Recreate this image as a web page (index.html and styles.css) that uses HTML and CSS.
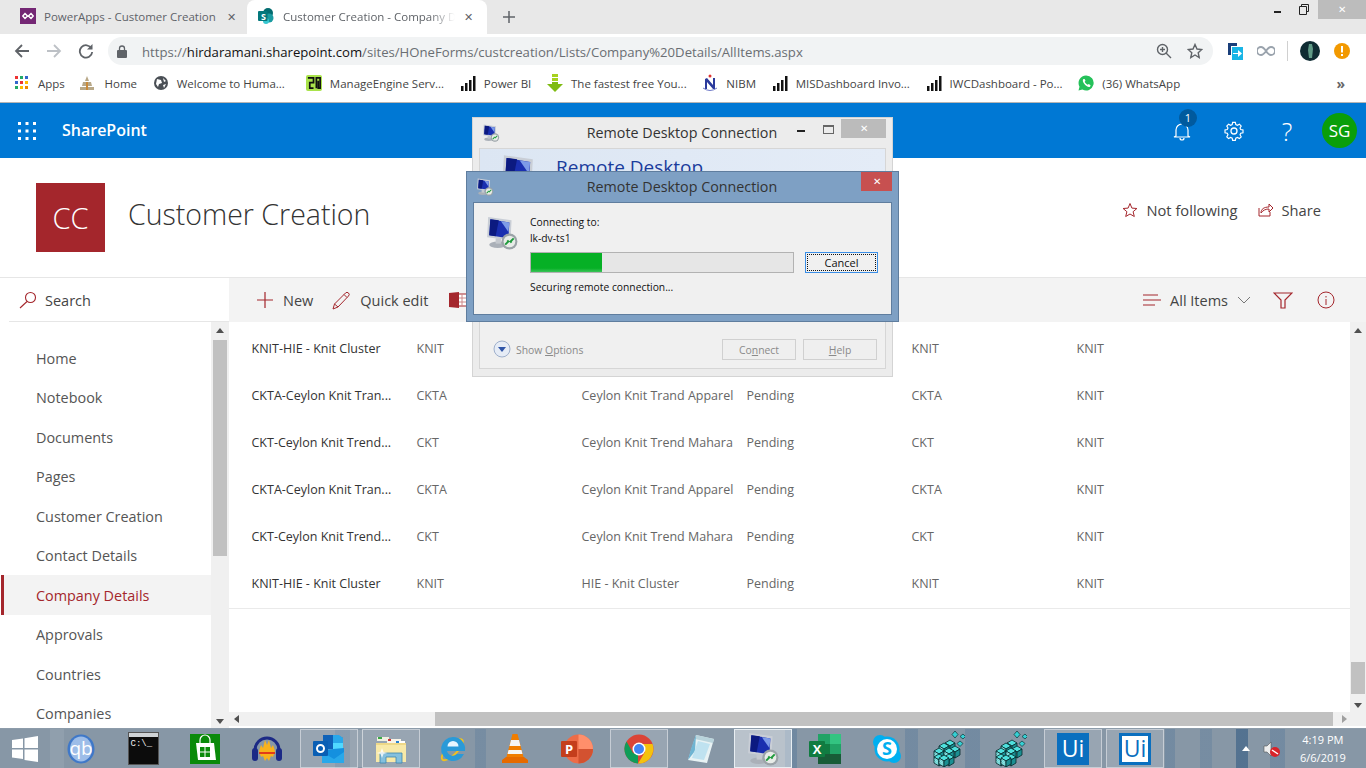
FILE: index.html
```html
<!DOCTYPE html>
<html lang="en">
<head>
  <meta charset="UTF-8">
  <title>Customer Creation - Company Details</title>
  <link rel="stylesheet" href="styles.css">
</head>
<body>
  <svg class="defs" width="0" height="0">
    <symbol id="bars" viewBox="0 0 16 16"><path d="M1 11h2.500v5H1zM5 8h2.500v8H5zM9 5h2.500v11H9zM13 1h2.500v15H13z" fill="#111"/></symbol>
    <symbol id="rdp" viewBox="0 0 32 32">
      <path d="M3 1l22 3-1 19L2 20z" fill="#c9ced6"/>
      <path d="M5 3l18 3-1 15L4 18z" fill="#1a2fb0"/>
      <path d="M5 3l8 1-3 15-6-1z" fill="#0c1a80"/>
      <path d="M15 5l8 1-1 9z" fill="#7d9be8"/>
      <ellipse cx="12" cy="27" rx="8" ry="3" fill="#aab0b8"/>
      <path d="M10 21h5v5h-5z" fill="#c4c8ce"/>
      <circle cx="23" cy="24" r="7.500" fill="#9ba3a8"/>
      <circle cx="23" cy="24" r="5.500" fill="#e8ece8"/>
      <path d="M19 27l3-3-1-1M27 21l-3 3 1 1" fill="none" stroke="#1e9a3c" stroke-width="1.800"/>
    </symbol>
    <pattern id="checker" width="2.400" height="2.400" patternUnits="userSpaceOnUse">
      <rect width="2.400" height="2.400" fill="#21b5b5"/>
      <rect width="1.200" height="1.200" fill="#d8ffff"/>
      <rect x="1.200" y="1.200" width="1.200" height="1.200" fill="#d8ffff"/>
    </pattern>
    <g id="cube">
      <path d="M0 3l5-3 5 3-5 3z" fill="#4fe0dc" stroke="#062a2c" stroke-width=".8"/>
      <path d="M0 3l5 3v6l-5-3z" fill="url(#checker)" stroke="#062a2c" stroke-width=".8"/>
      <path d="M10 3l-5 3v6l5-3z" fill="#1b8f92" stroke="#062a2c" stroke-width=".8"/>
    </g>
    <symbol id="registry" viewBox="0 0 32 36">
      <path d="M22 0l3 3.500-3 3.500-3-3.500zM30 3l2.500 2.500L30 8l-3-2.500z" fill="#35d0d4" stroke="#0d3336" stroke-width=".7"/>
      <path d="M27 10l3 2.500-3 3-3-3z" fill="#35d0d4" stroke="#0d3336" stroke-width=".7"/>
      <use href="#cube" x="12" y="9"/>
      <use href="#cube" x="6" y="12"/>
      <use href="#cube" x="17" y="15"/>
      <use href="#cube" x="1" y="17"/>
      <use href="#cube" x="11" y="17"/>
      <use href="#cube" x="1" y="23"/>
      <use href="#cube" x="11" y="23"/>
      <use href="#cube" x="6" y="24"/>
    </symbol>
  </svg>

  <div class="browser">
    <div class="tabstrip">
      <div class="tab">
        <svg class="favicon" viewBox="0 0 16 16"><rect width="16" height="16" fill="#742774"/><path d="M5 5.500L7.500 8 5 10.500 2.800 8zM11 5.500L13.200 8 11 10.500 8.500 8z" fill="none" stroke="#fff" stroke-width="1.500"/></svg>
        <span class="tab-title">PowerApps - Customer Creation</span>
        <span class="tab-close">✕</span>
      </div>
      <div class="tab tab-active">
        <svg class="favicon" viewBox="0 0 16 16"><circle cx="10" cy="5" r="5" fill="#036c70"/><circle cx="11" cy="10" r="4.500" fill="#1a9ba1"/><circle cx="8" cy="13" r="3" fill="#37c6d0"/><rect y="3" width="9.500" height="10" rx="1" fill="#03787c"/></svg>
        <span class="favicon-letter">S</span>
        <span class="tab-title">Customer Creation - Company Details</span>
        <span class="tab-close">✕</span>
      </div>
      <svg class="new-tab" width="12" height="12" viewBox="0 0 12 12"><path d="M6 0v12M0 6h12" stroke="#5f6368" stroke-width="1.500"/></svg>
      <div class="win-controls">
        <span class="win-min"></span>
        <svg class="win-restore" width="10" height="11" viewBox="0 0 10 11"><path d="M2.500 2.500V.5h7v7h-2M.5 2.500h7v8h-7z" fill="none" stroke="#222"/></svg>
        <span class="win-close">✕</span>
      </div>
    </div>

    <div class="toolbar">
      <svg class="nav-icon" width="16" height="16" viewBox="0 0 16 16"><path d="M15 8H2M8 2L2 8l6 6" fill="none" stroke="#5f6368" stroke-width="1.800"/></svg>
      <svg class="nav-icon" width="16" height="16" viewBox="0 0 16 16"><path d="M1 8h13M8 2l6 6-6 6" fill="none" stroke="#bdc1c6" stroke-width="1.800"/></svg>
      <svg class="nav-icon" width="16" height="16" viewBox="0 0 16 16"><path d="M13.500 5.500A6.200 6.200 0 1 0 14.200 9" fill="none" stroke="#5f6368" stroke-width="1.800"/><path d="M14.500 1v5.500H9z" fill="#5f6368"/></svg>
      <div class="omnibox">
        <svg width="10" height="13" viewBox="0 0 10 13"><rect y="5" width="10" height="8" rx="1" fill="#5f6368"/><path d="M2.500 5V3.500a2.500 2.500 0 0 1 5 0V5" fill="none" stroke="#5f6368" stroke-width="1.300"/></svg>
        <span class="url"><span class="url-dim">https://</span>hirdaramani.sharepoint.com<span class="url-dim">/sites/HOneForms/custcreation/Lists/Company%20Details/AllItems.aspx</span></span>
        <svg class="omni-right" width="16" height="16" viewBox="0 0 16 16"><circle cx="6.500" cy="6.500" r="5" fill="none" stroke="#5f6368" stroke-width="1.400"/><path d="M10 10l5 5M6.500 4v5M4 6.500h5" stroke="#5f6368" stroke-width="1.400"/></svg>
        <svg width="16" height="16" viewBox="0 0 16 16"><path d="M8 1.500l2 4.500 4.800.5-3.600 3.200 1 4.800L8 12l-4.200 2.500 1-4.800L1.200 6.500 6 6z" fill="none" stroke="#5f6368" stroke-width="1.400"/></svg>
      </div>
      <svg width="16" height="18" viewBox="0 0 16 18"><path d="M1 1h9v3H4v9H1z" fill="#1a3f7a"/><path d="M5 5h11v13H5z" fill="#19b5e6"/><path d="M6 11h5V8l4 3.500-4 3.500v-3H6z" fill="#fff"/></svg>
      <svg class="ext-infinity" width="18" height="10" viewBox="0 0 18 10"><path d="M9 5C7 2 5.500 1 4 1a4 4 0 0 0 0 8c1.500 0 3-1 5-4s3.500-4 5-4a4 4 0 0 1 0 8c-1.500 0-3-1-5-4z" fill="none" stroke="#9aa3ad" stroke-width="1.800"/></svg>
      <span class="toolbar-sep"></span>
      <svg class="avatar" width="20" height="20" viewBox="0 0 20 20"><circle cx="10" cy="10" r="10" fill="#0f2c33"/><path d="M9 3h3l1 5-1 9H9L8 9z" fill="#5f9a86"/></svg>
      <svg width="16" height="16" viewBox="0 0 16 16"><circle cx="8" cy="8" r="8" fill="#f29900"/><path d="M7 3h2v6.500H7zM7 11h2v2H7z" fill="#fff"/></svg>
    </div>

    <div class="bookmarks">
      <div class="bm"><svg width="16" height="14" viewBox="0 0 14 14"><path d="M0 0h3v3H0z" fill="#e33"/><path d="M5 0h3v3H5z" fill="#2a6"/><path d="M10 0h3v3h-3z" fill="#36c"/><path d="M0 5h3v3H0z" fill="#36c"/><path d="M5 5h3v3H5z" fill="#e33"/><path d="M10 5h3v3h-3z" fill="#fb0"/><path d="M0 10h3v3H0z" fill="#2a6"/><path d="M5 10h3v3H5z" fill="#fb0"/><path d="M10 10h3v3h-3z" fill="#e80"/></svg>Apps</div>
      <div class="bm bm-home"><svg width="20" height="16" viewBox="0 0 20 16"><path d="M10 1l2 5H8zM6 7h8l1 4H5zM3 12h14v3H3z" fill="#b8a888"/><path d="M9 7h2v8H9z" fill="#c98a3a"/></svg>Home</div>
      <div class="bm bm-wide"><svg width="16" height="14" viewBox="0 0 14 14"><circle cx="7" cy="7" r="7" fill="#4a4f55"/><path d="M3 3l4 1 1 3-3 1-1 3-2-3zM9 2l3 3-2 1zM9 9l3-1-2 4z" fill="#fff"/></svg>Welcome to Huma...</div>
      <div class="bm"><svg width="16" height="16" viewBox="0 0 17 17"><rect width="17" height="17" rx="2" fill="#a9e34b"/><path d="M2 3h6v5H4v6h4M11 14V3h4v11h-2V6" fill="none" stroke="#111" stroke-width="1.800"/></svg>ManageEngine Serv...</div>
      <div class="bm"><svg width="16" height="16"><use href="#bars"/></svg>Power BI</div>
      <div class="bm"><svg width="16" height="18" viewBox="0 0 16 18"><path d="M5 0h6v3H5zM5 4h6v3H5z" fill="#a6d21e"/><path d="M5 8h6v2h5l-8 8-8-8h5z" fill="#7fbb12"/></svg>The fastest free You...</div>
      <div class="bm"><svg width="16" height="18" viewBox="0 0 16 18"><circle cx="8" cy="2" r="1.500" fill="#d33"/><path d="M3 15V5l2-1 6 7V4h2v11h-2L5 8v7z" fill="#2b3a9c"/><path d="M1 14q7 5 14 0" fill="none" stroke="#6f7ac8"/></svg>NIBM</div>
      <div class="bm"><svg width="16" height="16"><use href="#bars"/></svg>MISDashboard Invo...</div>
      <div class="bm"><svg width="16" height="16"><use href="#bars"/></svg>IWCDashboard - Po...</div>
      <div class="bm"><svg width="16" height="16" viewBox="0 0 16 16"><path d="M8 .5a7.500 7.500 0 0 0-6.500 11.200L.5 15.500l3.900-1A7.500 7.500 0 1 0 8 .5z" fill="#25c15a"/><path d="M5.500 4c-1 1-1 2.500.5 4.500s3.500 3.500 5 3.500c1 0 1.500-1 1.500-1.800L10.800 9l-1 .8C8.500 9.300 7.200 8 6.700 6.800l.8-1L6.600 4z" fill="#fff"/></svg>(36) WhatsApp</div>
      <span class="bm-more">»</span>
    </div>
  </div>

  <div class="suitebar">
    <svg class="waffle" width="18" height="18" viewBox="0 0 18 18"><g fill="#fff"><rect width="3" height="3"/><rect x="7.500" width="3" height="3"/><rect x="15" width="3" height="3"/><rect y="7.500" width="3" height="3"/><rect x="7.500" y="7.500" width="3" height="3"/><rect x="15" y="7.500" width="3" height="3"/><rect y="15" width="3" height="3"/><rect x="7.500" y="15" width="3" height="3"/><rect x="15" y="15" width="3" height="3"/></g></svg>
    <span class="suite-name">SharePoint</span>
    <div class="suite-right">
      <div class="bell">
        <svg width="18" height="20" viewBox="0 0 18 20"><path d="M3 15V9a6 6 0 0 1 12 0v6l2 1H1zM7 17a2 2 0 0 0 4 0" fill="none" stroke="#fff" stroke-width="1.200"/></svg>
        <span class="bell-badge">1</span>
      </div>
      <svg width="20" height="20" viewBox="0 0 20 20"><circle cx="10" cy="10" r="3" fill="none" stroke="#fff" stroke-width="1.300"/><path d="M8.500 1h3l.5 2.500 1.800.8L16 3l2 2-1.300 2.200.8 1.800 2.500.5v3l-2.500.5-.8 1.800L18 17l-2 2-2.200-1.300-1.800.8-.5 2.500h-3L8 18.500l-1.800-.8L4 19l-2-2 1.300-2.200-.8-1.800L0 12.500v-3L2.500 9l.8-1.800L2 5l2-2 2.200 1.300L8 3.500z" transform="translate(1 .5) scale(.9)" fill="none" stroke="#fff" stroke-width="1.300"/></svg>
      <span class="suite-help">?</span>
      <span class="suite-avatar">SG</span>
    </div>
  </div>

  <div class="site-header">
    <div class="site-logo">CC</div>
    <h1 class="site-title">Customer Creation</h1>
    <div class="site-actions">
      <svg width="16" height="16" viewBox="0 0 16 16"><path d="M8 1.500l1.900 4.600 5 .4-3.800 3.200 1.200 4.800L8 12l-4.300 2.500 1.200-4.800L1.100 6.500l5-.4z" fill="none" stroke="#a4262c"/></svg>
      <span class="site-action-text">Not following</span>
      <svg class="share-icon" width="16" height="14" viewBox="0 0 16 14"><path d="M1 5v8h11V9M3 10c0-4 3-6 8-6V1l4 4-4 4V6c-3 0-6 1-8 4z" fill="none" stroke="#a4262c"/></svg>
      <span class="site-action-text">Share</span>
    </div>
  </div>

  <div class="commandbar">
    <div class="search-box">
      <svg width="18" height="18" viewBox="0 0 18 18"><circle cx="11.500" cy="6.500" r="5" fill="none" stroke="#a4262c" stroke-width="1.100"/><path d="M8 10.500L1 17" stroke="#a4262c" stroke-width="1.100"/></svg>
      <span>Search</span>
    </div>
    <div class="commands">
      <svg width="18" height="18" viewBox="0 0 18 18"><path d="M9 1v16M1 9h16" stroke="#a4262c" stroke-width="1.200"/></svg>
      <span class="cmd-text">New</span>
      <svg class="cmd-icon" width="19" height="19" viewBox="0 0 19 19"><path d="M1 18l1.500-5L13.500 2a2 2 0 0 1 3 3L6 16zM12 3.500l3 3M2.500 13L6 16" fill="none" stroke="#a4262c"/></svg>
      <span class="cmd-text">Quick edit</span>
      <svg class="cmd-icon cmd-excel" width="18" height="16" viewBox="0 0 18 16"><rect x="5" y="2" width="13" height="12" fill="#fff" stroke="#a4262c"/><path d="M9 2v12M13 2v12M5 6h13M5 10h13" stroke="#c88"/><path d="M0 1l10-1v16L0 15z" fill="#a4262c"/></svg>
      <div class="cmd-right">
        <svg width="18" height="12" viewBox="0 0 18 12"><path d="M0 1h15M0 6h18M0 11h12" stroke="#a4262c" stroke-width="1.100"/></svg>
        <span class="cmd-text">All Items</span>
        <svg class="cmd-chevron" width="14" height="8" viewBox="0 0 14 8"><path d="M1 1l6 6 6-6" fill="none" stroke="#777"/></svg>
        <svg class="cmd-filter" width="20" height="17" viewBox="0 0 20 17"><path d="M1 1h18l-7 7v8H8V8z" fill="none" stroke="#a4262c" stroke-width="1.200"/></svg>
        <svg class="cmd-info" width="18" height="18" viewBox="0 0 18 18"><circle cx="9" cy="9" r="8" fill="none" stroke="#a4262c"/><path d="M9 8v6M9 5v1.500" stroke="#a4262c"/></svg>
      </div>
    </div>
  </div>

  <div class="content">
    <nav class="sidenav">
      <div class="nav-links">
        <a class="nav-link">Home</a>
        <a class="nav-link">Notebook</a>
        <a class="nav-link">Documents</a>
        <a class="nav-link">Pages</a>
        <a class="nav-link">Customer Creation</a>
        <a class="nav-link">Contact Details</a>
        <a class="nav-link nav-selected">Company Details</a>
        <a class="nav-link">Approvals</a>
        <a class="nav-link">Countries</a>
        <a class="nav-link">Companies</a>
      </div>
      <div class="nav-scroll">
        <span class="arrow-up"></span>
        <span class="nav-thumb"></span>
        <span class="arrow-down"></span>
      </div>
    </nav>

    <div class="list-wrap">
      <div class="list-main">
        <div class="rows">
          <div class="row"><span class="cell cell-first">KNIT-HIE - Knit Cluster</span><span class="cell">KNIT</span><span class="cell"></span><span class="cell"></span><span class="cell">KNIT</span><span class="cell">KNIT</span></div>
          <div class="row"><span class="cell cell-first">CKTA-Ceylon Knit Tran...</span><span class="cell">CKTA</span><span class="cell">Ceylon Knit Trand Apparel</span><span class="cell">Pending</span><span class="cell">CKTA</span><span class="cell">KNIT</span></div>
          <div class="row"><span class="cell cell-first">CKT-Ceylon Knit Trend...</span><span class="cell">CKT</span><span class="cell">Ceylon Knit Trend Mahara</span><span class="cell">Pending</span><span class="cell">CKT</span><span class="cell">KNIT</span></div>
          <div class="row"><span class="cell cell-first">CKTA-Ceylon Knit Tran...</span><span class="cell">CKTA</span><span class="cell">Ceylon Knit Trand Apparel</span><span class="cell">Pending</span><span class="cell">CKTA</span><span class="cell">KNIT</span></div>
          <div class="row"><span class="cell cell-first">CKT-Ceylon Knit Trend...</span><span class="cell">CKT</span><span class="cell">Ceylon Knit Trend Mahara</span><span class="cell">Pending</span><span class="cell">CKT</span><span class="cell">KNIT</span></div>
          <div class="row"><span class="cell cell-first">KNIT-HIE - Knit Cluster</span><span class="cell">KNIT</span><span class="cell">HIE - Knit Cluster</span><span class="cell">Pending</span><span class="cell">KNIT</span><span class="cell">KNIT</span></div>
        </div>
        <div class="list-scroll">
          <span class="arrow-up"></span>
          <span class="list-thumb"></span>
          <span class="arrow-down"></span>
        </div>
      </div>
      <div class="hscroll">
        <span class="arrow-left"></span>
        <span class="hscroll-thumb"></span>
        <span class="arrow-right"></span>
      </div>
    </div>
  </div>

  <div class="taskbar">
    <div class="tb-item tb-start"><svg width="26" height="26" viewBox="0 0 26 26"><path d="M0 4l11-1.500V12H0zM12.500 2.300L26 0v12H12.500zM0 13.500h11V23L0 21.500zM12.500 13.500H26V26l-13.500-2z" fill="#fff"/></svg></div>
    <div class="tb-item"><svg width="28" height="30" viewBox="0 0 28 30"><ellipse cx="14" cy="15" rx="13.500" ry="14.500" fill="#3f78c8"/><ellipse cx="14" cy="15" rx="11" ry="12.500" fill="#9dbde8"/><text x="14" y="21" text-anchor="middle" class="qb-text">qb</text></svg></div>
    <div class="tb-item"><div class="cmd-window"><span class="cmd-prompt">C:\_</span></div></div>
    <div class="tb-item"><svg width="30" height="30" viewBox="0 0 30 30"><rect width="30" height="30" fill="#0a8a0a"/><path d="M10 9V6a5 5 0 0 1 10 0v3" fill="none" stroke="#fff" stroke-width="1.200"/><path d="M6 9h18l2 17H8z" fill="#fff"/><path d="M10 13h4.500v4.500H10zM15.500 13H20v4.500h-4.500zM10 18.500h4.500V23H10zM15.500 18.500H20V23h-4.500z" fill="#0a8a0a"/></svg></div>
    <div class="tb-item"><svg width="30" height="30" viewBox="0 0 30 30"><path d="M3 16a12 12 0 0 1 24 0" fill="none" stroke="#1c2a86" stroke-width="3"/><rect x="0" y="14" width="6" height="13" rx="3" fill="#1c2a86"/><rect x="24" y="14" width="6" height="13" rx="3" fill="#1c2a86"/><path d="M7 17l2-6 2 3 2-8 2 5 2-5 2 8 2-3 2 6-2 6-2-1-2 5-2-3-2 3-2-5-2 1z" fill="#f9b21c"/><path d="M7 18h16v2H7z" fill="#e23b1a"/></svg></div>
    <div class="tb-item tb-open tb-outlook"><svg width="32" height="30" viewBox="0 0 32 30"><path d="M10 1h14l6 3v11H10z" fill="#0f62b8"/><path d="M20 1h6l4 3v5H20z" fill="#28a8ea"/><path d="M20 9h10v7H20z" fill="#50d9ff"/><path d="M9 16l22-2v14l-2 1H9z" fill="#1490df"/><path d="M9 18l12 7 10-7v11H9z" fill="#28a8ea"/><rect y="7" width="15" height="15" rx="1" fill="#0a5fb4"/><circle cx="7.500" cy="14.500" r="3.500" fill="none" stroke="#fff" stroke-width="2"/></svg></div>
    <div class="tb-item tb-open"><svg width="32" height="30" viewBox="0 0 32 30"><path d="M2 3h12v4H2z" fill="#f0f0e0"/><path d="M3 3h4v2H3z" fill="#3aa847"/><path d="M12 5h14v4H12z" fill="#f8f4e8"/><path d="M13 5h3v2h-3z" fill="#c33"/><path d="M21 7h9v4h-9z" fill="#fff"/><path d="M21 7h3v2h-3z" fill="#2a80d0"/><path d="M1 9h30v19H1z" fill="#eed888"/><path d="M1 11h30v17H1z" fill="#f8e9a8"/><path d="M5 29V19h22v10h-6v-6H11v6z" fill="#84c0de" stroke="#3d86ad" stroke-width=".8"/><path d="M7 14l1.500 4 4 1-4 1L7 24l-1.500-4-4-1 4-1z" fill="#fff" opacity=".8"/></svg></div>
    <div class="tb-item"><svg width="30" height="30" viewBox="0 0 30 30"><ellipse cx="14" cy="15" rx="14" ry="5" transform="rotate(-45 15 15)" fill="none" stroke="#f3c21b" stroke-width="1.800"/><path d="M15 3a12 12 0 1 0 11 17h-7a6 6 0 0 1-10-3h18a12 12 0 0 0-12-14z" fill="#2a9ad8"/><path d="M9.500 12.500a5.500 5.500 0 0 1 11 0z" fill="#e8f6ff"/></svg></div>
    <div class="tb-item"><svg width="28" height="30" viewBox="0 0 28 30"><path d="M11.500 0h5l6 23H5.500z" fill="#f07d00"/><path d="M10 6h8l1.500 6h-11zM7.500 16h13l1 4h-15z" fill="#f5f5f5"/><path d="M5 23h18l4 3v3H1v-3z" fill="#e66a00"/></svg></div>
    <div class="tb-item"><svg width="32" height="30" viewBox="0 0 32 30"><circle cx="17.500" cy="15" r="14.500" fill="#ed6c47"/><path d="M17.500.5A14.500 14.500 0 0 1 32 15H17.500z" fill="#ff8f6b"/><path d="M17.500 15H32a14.500 14.500 0 0 1-14.500 14.500z" fill="#d35230"/><rect y="7" width="16" height="16" rx="1" fill="#c43e1c"/><text x="8" y="20" text-anchor="middle" class="office-letter">P</text></svg></div>
    <div class="tb-item tb-open"><svg width="30" height="30" viewBox="0 0 30 30"><circle cx="15" cy="15" r="14.500" fill="#db4437"/><path d="M15 10h13.500A14.500 14.500 0 0 1 14 29.500L21 18z" fill="#f4c20d"/><path d="M14 29.500A14.500 14.500 0 0 1 2.500 7.500L9 19l5 1z" fill="#0f9d58"/><circle cx="15" cy="15" r="6.500" fill="#fff"/><circle cx="15" cy="15" r="5" fill="#4285f4"/></svg></div>
    <div class="tb-item"><svg width="30" height="34" viewBox="0 0 30 34"><path d="M10 3l18 4-7 24-19-3z" fill="#e8f2f4"/><path d="M10 3l18 4-1 4-18-4z" fill="#b9d4dc"/><path d="M2 28c2-8 4-15 8-25l-1 16z" fill="#6fb4d2"/><path d="M6 26l6-17 12 3-6 16z" fill="#bfe2f0"/></svg></div>
    <div class="tb-item tb-open tb-current"><svg width="34" height="34"><use href="#rdp"/></svg></div>
    <div class="tb-item"><svg width="32" height="32" viewBox="0 0 32 32"><path d="M9 1h12v10H9z" fill="#21a366"/><path d="M21 1h11v10H21z" fill="#33c481"/><path d="M9 11h12v10H9z" fill="#107c41"/><path d="M21 11h11v10H21z" fill="#21a366"/><path d="M9 21h23v10H9z" fill="#185c37"/><rect y="8" width="16" height="16" rx="1" fill="#107c41"/><text x="8" y="21" text-anchor="middle" class="office-letter">X</text></svg></div>
    <div class="tb-item"><svg width="30" height="34" viewBox="0 0 30 30"><circle cx="8" cy="8" r="7" fill="#00aff0"/><circle cx="22" cy="22" r="7" fill="#00aff0"/><circle cx="15" cy="15" r="12.500" fill="#00aff0"/><circle cx="15" cy="15" r="10" fill="#fff"/><text x="15" y="21" text-anchor="middle" class="skype-letter">S</text></svg></div>
    <div class="tb-item"><svg width="32" height="36"><use href="#registry"/></svg></div>
    <div class="tb-item"><svg width="32" height="36"><use href="#registry"/></svg></div>
    <div class="tb-item tb-open"><span class="ui-tile">Ui</span></div>
    <div class="tb-item tb-open"><span class="ui-tile ui-outline">Ui</span></div>
    <div class="tray">
      <span class="tray-up"></span>
      <svg width="18" height="18" viewBox="0 0 18 18"><path d="M1 6h3l4-4v14l-4-4H1z" fill="#eee" stroke="#555" stroke-width=".6"/><circle cx="12" cy="12" r="5" fill="#d8232a"/><path d="M9 10l6 4" stroke="#fff" stroke-width="1.500"/></svg>
      <div class="clock"><span>4:19 PM</span><span>6/6/2019</span></div>
    </div>
  </div>

  <!-- windows on top of the page -->
  <div class="rdp-back">
    <div class="rdp-back-title">
      <svg width="18" height="18"><use href="#rdp"/></svg>
      <span class="rdp-caption">Remote Desktop Connection</span>
      <span class="back-min"></span>
      <span class="back-max"></span>
      <span class="back-close">✕</span>
    </div>
    <div class="rdp-back-panel">
      <div class="rdp-banner">
        <svg width="42" height="42"><use href="#rdp"/></svg>
        <span>Remote Desktop</span>
      </div>
      <div class="rdp-back-footer">
        <svg width="18" height="18" viewBox="0 0 18 18"><circle cx="9" cy="9" r="8" fill="#e6ecf6" stroke="#9fb0cc"/><path d="M5 7h8l-4 5z" fill="#2f55a8"/></svg>
        <span class="show-options">Show <u>O</u>ptions</span>
        <span class="back-btn back-btn-connect">Co<u>n</u>nect</span>
        <span class="back-btn"><u>H</u>elp</span>
      </div>
    </div>
  </div>

  <div class="rdp-front">
    <div class="rdp-front-title">
      <svg width="18" height="18"><use href="#rdp"/></svg>
      <span class="rdp-caption">Remote Desktop Connection</span>
      <span class="front-close">✕</span>
    </div>
    <div class="rdp-front-panel">
      <svg class="rdp-big" width="34" height="34"><use href="#rdp"/></svg>
      <div class="rdp-body">
        <div class="rdp-msg">Connecting to:</div>
        <div class="rdp-msg">lk-dv-ts1</div>
        <div class="rdp-progress-row">
          <div class="progress"><div class="progress-fill" style="width: 27%"></div></div>
          <div class="cancel-btn"><span>Cancel</span></div>
        </div>
        <div class="rdp-msg rdp-status">Securing remote connection...</div>
      </div>
    </div>
  </div>
</body>
</html>
```

FILE: styles.css
```css
* {
  box-sizing: border-box;
}
html, body {
  margin: 0;
  height: 100%;
}
body {
  position: relative;
  width: 1366px;
  height: 768px;
  overflow: hidden;
  display: flex;
  flex-direction: column;
  font-family: "Open Sans", "Noto Sans", sans-serif;
  color: #333;
  background: #fff;
}
svg {
  flex-shrink: 0;
  display: block;
}
.defs {
  position: absolute;
}

/* browser chrome */
.browser {
  height: 103px;
  border-bottom: 1px solid #b5b5b5;
}
.tabstrip {
  height: 34px;
  background: #e8e8e8;
  display: flex;
  align-items: center;
  padding-left: 8px;
}
.tab {
  width: 239px;
  height: 34px;
  display: flex;
  align-items: center;
  padding: 0 0 2px 12px;
  gap: 8px;
  position: relative;
  font-size: 11.5px;
  color: #5f6368;
  white-space: nowrap;
}
.tab-active {
  width: 240px;
  padding-left: 11px;
  gap: 9px;
  background: #fff;
  border-radius: 8px 8px 0 0;
}
.favicon {
  width: 16px;
  height: 16px;
}
.favicon-letter {
  position: absolute;
  left: 14px;
  font-size: 9px;
  font-weight: 700;
  color: #fff;
}
.tab-title {
  width: 172px;
  overflow: hidden;
  flex-shrink: 0;
}
.tab-active .tab-title {
  -webkit-mask-image: linear-gradient(90deg, #000 85%, transparent);
  mask-image: linear-gradient(90deg, #000 85%, transparent);
}
.tab-close {
  font-size: 11px;
  color: #5f6368;
  margin-left: 3px;
}
.tab-active .tab-close {
  margin-left: 0;
}
.new-tab {
  margin-left: 16px;
}
.win-controls {
  margin-left: auto;
  display: flex;
  align-items: flex-start;
  height: 34px;
}
.win-min {
  width: 7px;
  height: 2px;
  background: #222;
  margin: 11px 18px 0 0;
}
.win-restore {
  margin: 4px 9px 0 0;
}
.win-close {
  width: 48px;
  height: 19px;
  background: #bcbcbc;
  color: #fff;
  font-size: 10px;
  line-height: 19px;
  text-align: center;
}
.toolbar {
  height: 34px;
  display: flex;
  align-items: center;
  padding-left: 14px;
}
.nav-icon {
  margin-right: 16px;
}
.omnibox {
  width: 1105px;
  height: 28px;
  margin: 0 14px 0 -2px;
  background: #f1f3f4;
  border-radius: 14px;
  display: flex;
  align-items: center;
  gap: 15px;
  padding: 0 10px 0 9px;
}
.url {
  padding-top: 1px;
  font-size: 13.15px;
  color: #111;
  white-space: nowrap;
}
.url-dim {
  color: #6a6e73;
}
.omni-right {
  margin-left: auto;
}
.ext-infinity {
  margin-left: 14px;
}
.toolbar-sep {
  width: 1px;
  height: 20px;
  background: #d0d0d0;
  margin: 0 12px;
}
.avatar {
  margin-right: 14px;
}
.bookmarks {
  height: 34px;
  display: flex;
  align-items: center;
  padding: 0 0 4px 14px;
  position: relative;
  font-size: 11.5px;
  color: #444;
  white-space: nowrap;
}
.bm {
  display: flex;
  align-items: center;
  gap: 8px;
  margin-right: 15.7px;
}
.bm-home {
  margin-left: -4px;
}
.bm-wide {
  margin-right: 21px;
}
.bm-more {
  position: absolute;
  right: 21px;
  font-size: 14px;
  font-weight: 700;
  color: #666;
}

/* sharepoint bars */
.suitebar {
  height: 55px;
  background: #0078d4;
  display: flex;
  align-items: center;
  padding-left: 18px;
  flex-shrink: 0;
}
.suite-name {
  margin: -2px 0 0 26px;
  font-size: 16px;
  font-weight: 600;
  color: #fff;
}
.suite-right {
  margin-left: auto;
  display: flex;
  align-items: center;
  gap: 34px;
  padding-right: 9px;
}
.bell {
  position: relative;
  margin-right: -1px;
}
.bell-badge {
  position: absolute;
  left: 6px;
  top: -12px;
  width: 18px;
  height: 18px;
  border-radius: 50%;
  background: #005a9e;
  color: #fff;
  font-size: 11px;
  line-height: 18px;
  text-align: center;
}
.suite-help {
  width: 24px;
  margin-left: -3px;
  font-size: 25px;
  font-weight: 300;
  color: #fff;
  text-align: center;
}
.suite-avatar {
  width: 35px;
  height: 35px;
  margin-left: -11px;
  border-radius: 50%;
  background: #0a9e0a;
  color: #fff;
  font-size: 17px;
  line-height: 35px;
  text-align: center;
}
.site-header {
  height: 119px;
  display: flex;
  align-items: center;
  padding: 0 45px 0 36px;
  flex-shrink: 0;
}
.site-logo {
  width: 69px;
  height: 69px;
  margin-top: -1px;
  background: #a4262c;
  color: #fff;
  font-size: 29px;
  font-weight: 300;
  line-height: 69px;
  text-align: center;
}
.site-title {
  margin: -8px 0 0 23px;
  font-size: 28.5px;
  font-weight: 300;
  color: #333;
}
.site-actions {
  margin-left: auto;
  margin-top: -15px;
  display: flex;
  align-items: center;
  gap: 8px;
}
.site-action-text {
  font-size: 14.7px;
  color: #444;
}
.share-icon {
  margin-left: 12px;
}
.commandbar {
  height: 45px;
  display: flex;
  border-top: 1px solid #e6e6e6;
  flex-shrink: 0;
  font-size: 14.5px;
}
.search-box {
  width: 229px;
  display: flex;
  align-items: center;
  gap: 8px;
  padding-left: 19px;
  color: #444;
  background: linear-gradient(#e6e6e6, #e6e6e6) no-repeat 9px 100% / 220px 1px;
}
.commands {
  flex: 1;
  background: #f3f3f3;
  display: flex;
  align-items: center;
  padding: 0 31px 0 27px;
}
.cmd-text {
  color: #444;
  margin-left: 9px;
}
.cmd-icon {
  margin-left: 19px;
}
.cmd-excel {
  margin-left: 21px;
}
.cmd-right {
  margin-left: auto;
  display: flex;
  align-items: center;
}
.cmd-chevron {
  margin-left: 9px;
}
.cmd-filter {
  margin-left: 22px;
}
.cmd-info {
  margin-left: 24px;
}

/* left nav and list */
.content {
  flex: 1;
  min-height: 0;
  display: flex;
}
.sidenav {
  width: 229px;
  display: flex;
}
.nav-links {
  flex: 1;
  padding-top: 17.5px;
  overflow: hidden;
}
.nav-link {
  display: block;
  height: 39.5px;
  line-height: 38px;
  padding-left: 36px;
  font-size: 14.4px;
  color: #555;
}
.nav-selected {
  margin: -1.5px 0 1.5px 1px;
  line-height: 41px;
  padding-left: 32px;
  color: #a4262c;
  background: #f3f3f3;
  border-left: 3px solid #a4262c;
}
.nav-scroll, .list-scroll {
  background: #f0f0f0;
  display: flex;
  flex-direction: column;
  align-items: center;
  flex-shrink: 0;
}
.nav-scroll {
  width: 18px;
}
.list-scroll {
  width: 16px;
}
.nav-thumb {
  width: 14px;
  height: 216px;
  margin-top: 7px;
  background: #c1c1c1;
}
.arrow-up, .arrow-down {
  width: 0;
  height: 0;
  margin-top: 6px;
  border: 4px solid transparent;
  border-top-width: 0;
  border-bottom: 5px solid #505050;
}
.arrow-down {
  margin-top: auto;
  margin-bottom: 4px;
  border-top: 5px solid #505050;
  border-bottom-width: 0;
}
.list-wrap {
  flex: 1;
  display: flex;
  flex-direction: column;
  min-width: 0;
}
.list-main {
  flex: 1;
  display: flex;
  min-height: 0;
}
.rows {
  flex: 1;
  padding: 3px 0 1px;
  margin-bottom: auto;
  border-bottom: 1px solid #eaeaea;
}
.row {
  height: 47px;
  display: flex;
  align-items: center;
  padding-left: 22.5px;
  font-size: 12.5px;
  color: #666;
}
.cell {
  width: 165px;
  white-space: nowrap;
}
.cell-first {
  color: #333;
}
.list-thumb {
  width: 14px;
  height: 32px;
  margin-top: 329px;
  background: #c1c1c1;
}
.hscroll {
  height: 14px;
  background: #f0f0f0;
  display: flex;
  align-items: center;
  margin-bottom: 2px;
}
.arrow-left, .arrow-right {
  width: 0;
  height: 0;
  border: 4px solid transparent;
  border-left-width: 0;
  border-right: 5px solid #505050;
  margin-left: 5px;
}
.arrow-right {
  border-right-width: 0;
  border-left: 5px solid #a0a0a0;
  margin-left: 9px;
}
.hscroll-thumb {
  width: 898px;
  height: 14px;
  margin-left: 196px;
  background: #c1c1c1;
}

/* windows taskbar */
.taskbar {
  height: 40px;
  flex-shrink: 0;
  display: flex;
  align-items: center;
  gap: 4px;
  border-top: 1px solid #8d9caa;
  background:
    linear-gradient(90deg,
      transparent 0 50px, rgba(255,255,255,.08) 50px 64px, transparent 64px 335px,
      rgba(70,110,150,.25) 335px 350px, transparent 350px 475px, rgba(70,110,150,.25) 475px 486px,
      transparent 486px 785px, rgba(70,110,150,.35) 785px 797px, transparent 797px 905px,
      rgba(70,110,150,.3) 905px 918px, transparent 918px 965px, rgba(70,110,150,.3) 965px 980px,
      transparent 980px 1165px, rgba(70,110,150,.3) 1165px 1175px, transparent 1175px 1200px,
      rgba(70,110,150,.25) 1200px 1212px, transparent 1212px 1236px, rgba(50,90,130,.6) 1236px 1248px,
      transparent 1248px 1270px, rgba(70,110,150,.3) 1270px 1285px, transparent 1285px),
    #8797a6;
}
.tb-item {
  width: 58px;
  height: 39px;
  display: flex;
  align-items: center;
  justify-content: center;
  flex-shrink: 0;
}
.tb-start {
  width: 48px;
  padding-left: 2px;
}
.tb-open {
  background: rgba(255,255,255,.14);
  border: 1px solid rgba(255,255,255,.45);
}
.tb-outlook {
  box-shadow: 6px 0 0 -1px rgba(255,255,255,.12);
}
.tb-current {
  background: rgba(255,255,255,.42);
  border-color: #e8eef2;
}
.qb-text {
  font-size: 19px;
  fill: #fff;
}
.cmd-window {
  width: 29px;
  height: 31px;
  background: #0c0c0c;
  border-top: 4px solid #cfd3d6;
  box-shadow: 0 0 0 1px #555;
}
.cmd-prompt {
  display: block;
  padding-left: 2px;
  font-family: "Liberation Mono", monospace;
  font-size: 9px;
  line-height: 14px;
  color: #eee;
}
.office-letter {
  font-size: 13px;
  font-weight: 700;
  fill: #fff;
}
.skype-letter {
  font-size: 18px;
  font-weight: 700;
  fill: #00aff0;
}
.ui-tile {
  width: 32px;
  height: 32px;
  background: #0a6fbf;
  color: #fff;
  font-size: 23px;
  line-height: 31px;
  text-align: center;
}
.ui-outline {
  background: #fff;
  color: #0a6fbf;
  border: 3px solid #0a6fbf;
  line-height: 25px;
}
.tray {
  flex: 1;
  display: flex;
  align-items: center;
  padding-left: 74px;
  color: #fff;
}
.tray-up {
  width: 0;
  height: 0;
  border: 4px solid transparent;
  border-top-width: 0;
  border-bottom: 5px solid #fff;
}
.tray svg {
  margin-left: 13px;
}
.clock {
  margin-left: 19px;
  display: flex;
  flex-direction: column;
  align-items: center;
  gap: 4px;
  font-size: 11px;
  line-height: 14px;
}

/* remote desktop windows */
.rdp-back {
  position: absolute;
  left: 472px;
  top: 117px;
  width: 421px;
  height: 260px;
  background: #ececec;
  border: 1px solid #d4d4d4;
  padding: 0 6px 6px;
}
.rdp-back-title, .rdp-front-title {
  height: 30px;
  display: flex;
  align-items: center;
  position: relative;
  padding-left: 3px;
}
.rdp-caption {
  position: absolute;
  left: 0;
  right: 0;
  margin: -1px 0 0 -1px;
  text-align: center;
  font-size: 14.3px;
  color: #333;
}
.back-min {
  position: absolute;
  left: 318px;
  top: 12px;
  width: 8px;
  height: 2px;
  background: #222;
}
.back-max {
  position: absolute;
  left: 344px;
  top: 7px;
  width: 11px;
  height: 9px;
  border: 1px solid #666;
  border-top-width: 2px;
}
.back-close {
  position: absolute;
  left: 362px;
  top: 1px;
  width: 45px;
  height: 19px;
  background: #bbb;
  color: #fff;
  font-size: 10px;
  line-height: 19px;
  text-align: center;
}
.rdp-back-panel {
  height: 221px;
  border: 1px solid #d6d6d6;
  background: #f0f0f0;
  display: flex;
  flex-direction: column;
}
.rdp-banner {
  height: 60px;
  background: linear-gradient(90deg, #dce6f3, #e4ecf7);
  display: flex;
  gap: 14px;
  padding: 5px 0 0 20px;
  font-size: 19px;
  color: #1a3c9c;
}
.rdp-back-footer {
  margin-top: auto;
  height: 28px;
  margin-bottom: 5px;
  display: flex;
  align-items: center;
  padding: 0 8px 0 13px;
  font-size: 10.4px;
  color: #8a8a8a;
}
.show-options {
  margin-left: 5px;
  padding-top: 1px;
}
.back-btn {
  width: 74px;
  height: 21px;
  line-height: 20px;
  text-align: center;
  border: 1px solid #d0d0d0;
  background: #efefef;
}
.back-btn-connect {
  margin: 0 7px 0 auto;
}
.rdp-front {
  position: absolute;
  left: 466px;
  top: 171px;
  width: 433px;
  height: 151px;
  background: #7ea0c4;
  border: 1px solid #5f7d9e;
  padding: 0 6px 6px;
}
.front-close {
  position: absolute;
  right: 0;
  top: 0;
  width: 31px;
  height: 19px;
  background: #c75050;
  color: #fff;
  font-size: 10px;
  line-height: 19px;
  text-align: center;
}
.rdp-front-panel {
  height: 113px;
  background: #f0f0f0;
  border: 1px solid #5f7d9e;
  display: flex;
  padding: 11px 13px 0 11px;
}
.rdp-big {
  margin-top: 2px;
}
.rdp-body {
  flex: 1;
  margin-left: 11px;
  font-size: 10.3px;
  color: #111;
}
.rdp-msg {
  line-height: 16px;
}
.rdp-progress-row {
  display: flex;
  justify-content: space-between;
  margin-top: 6px;
}
.progress {
  width: 264px;
  height: 21px;
  background: #e6e6e6;
  border: 1px solid #b2b2b2;
}
.progress-fill {
  height: 100%;
  background: linear-gradient(#06b025 80%, #3cc45a);
}
.cancel-btn {
  width: 73px;
  height: 21px;
  padding: 1px;
  border: 1px solid #3a8ee6;
  background: #f0f0f0;
  font-size: 11px;
}
.cancel-btn span {
  display: block;
  height: 17px;
  line-height: 15px;
  text-align: center;
  border: 1px dotted #111;
}
.rdp-status {
  margin-top: 6px;
}
```
